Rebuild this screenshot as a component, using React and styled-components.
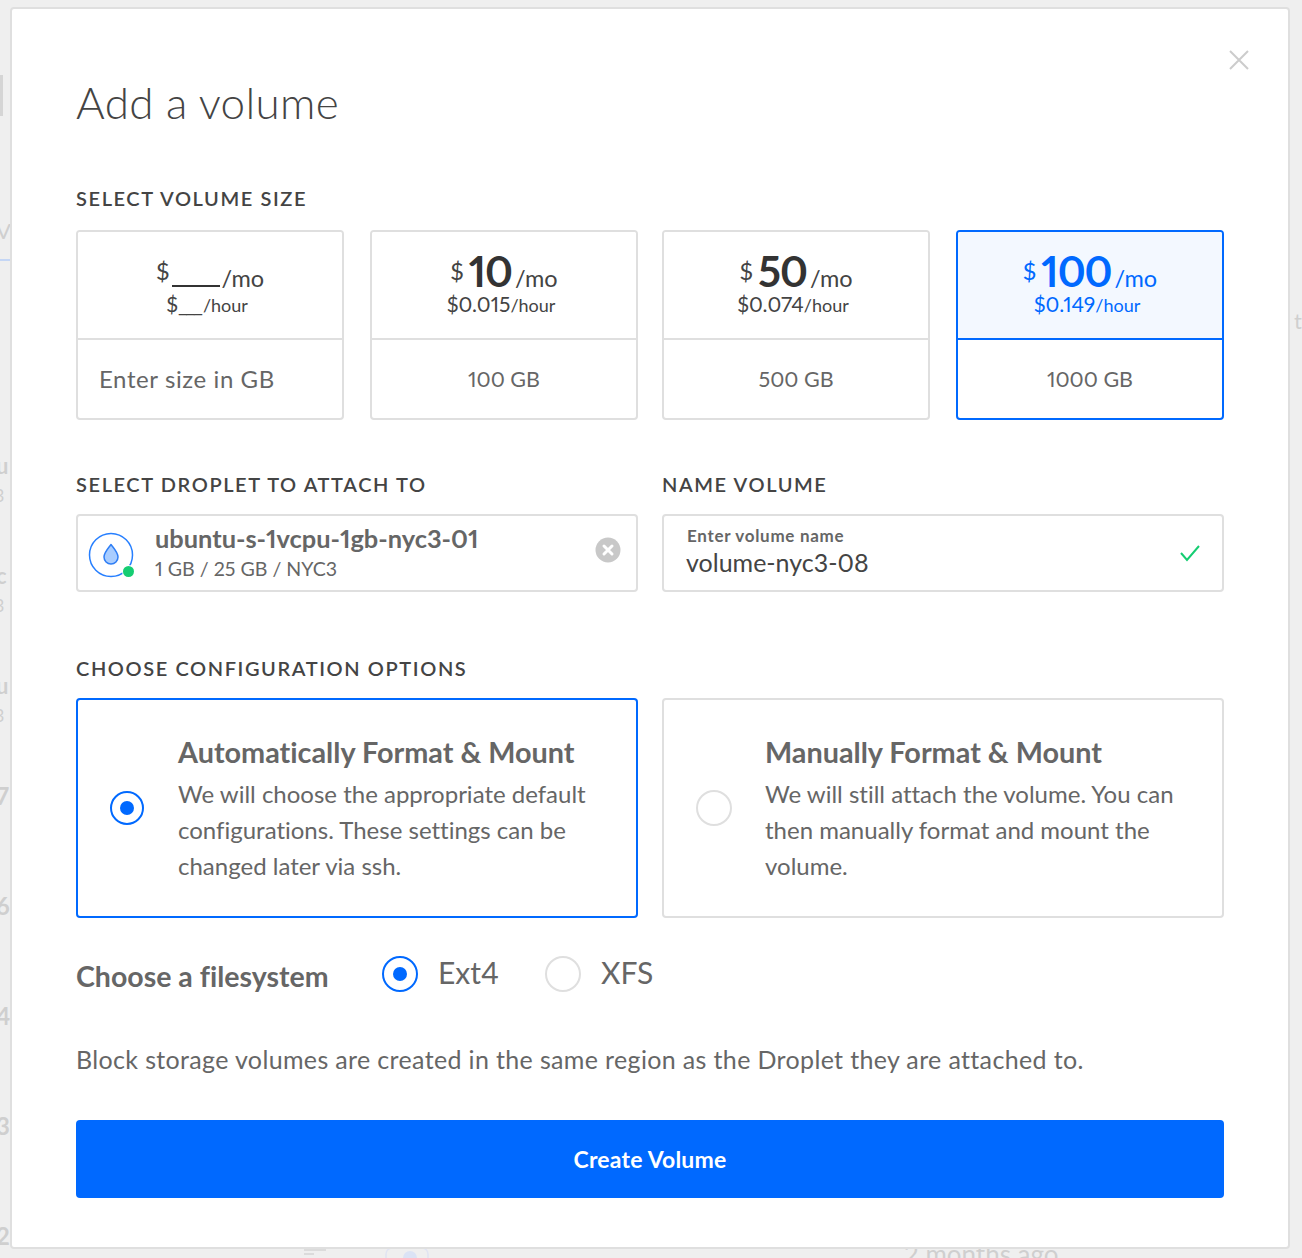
import React from 'react';
import styled, { createGlobalStyle } from 'styled-components';

const FONT = `Lato, "Open Sans", "Liberation Sans", sans-serif`;
const BLUE = '#0069ff';

const GlobalStyle = createGlobalStyle`
  html, body {
    margin: 0;
    padding: 0;
    background: #efefef;
  }
  body {
    font-family: ${FONT};
    font-variant-ligatures: none;
    font-variant-numeric: proportional-nums;
    color: #444;
  }
  * {
    box-sizing: border-box;
  }
`;

const Page = styled.div`
  position: relative;
  width: 1302px;
  height: 1258px;
  padding: 7px 12px 0 10px;
  overflow: hidden;
`;

const BackdropText = styled.span`
  position: absolute;
  left: ${(p) => p.$left}px;
  top: ${(p) => p.$top}px;
  font-size: ${(p) => p.$size}px;
  font-weight: ${(p) => p.$weight || 400};
  line-height: 1;
  color: #cfcfcf;
`;

const BackdropBar = styled.span`
  position: absolute;
  left: 0;
  top: ${(p) => p.$top}px;
  width: ${(p) => p.$width}px;
  height: ${(p) => p.$height}px;
  background: ${(p) => p.$color};
`;

const BackdropIcon = styled.svg`
  position: absolute;
  left: 300px;
  top: 1244px;
`;

const Modal = styled.div`
  position: relative;
  height: 1242px;
  padding: 70px 64px 0 64px;
  background: #fff;
  border: 2px solid #dfdfdf;
  border-radius: 4px;
`;

const CloseButton = styled.button`
  position: absolute;
  top: 40px;
  right: 38px;
  width: 22px;
  height: 22px;
  padding: 0;
  display: block;
  background: none;
  border: 0;
`;

const Title = styled.h1`
  margin: 0 0 61px;
  height: 46px;
  font-size: 44px;
  line-height: 46px;
  font-weight: 300;
  letter-spacing: 0.3px;
  color: #444;
`;

const SectionLabel = styled.div`
  height: 24px;
  margin-bottom: ${(p) => (p.$roomy ? '20px' : '18px')};
  font-size: 20px;
  line-height: 24px;
  font-weight: 600;
  letter-spacing: 1.6px;
  color: #444;
  text-transform: uppercase;
`;

const TwoColumns = styled.div`
  display: grid;
  grid-template-columns: 1fr 1fr;
  gap: 24px;
`;

const SizeGrid = styled(TwoColumns)`
  margin-bottom: 52px;
`;

const SizePair = styled.div`
  display: flex;
  justify-content: space-between;
`;

const SizeCard = styled.div`
  width: 268px;
  height: 190px;
  display: flex;
  flex-direction: column;
  border: 2px solid ${(p) => (p.$selected ? BLUE : '#dfdfdf')};
  border-radius: 4px;
  overflow: hidden;
`;

const PriceArea = styled.div`
  height: 108px;
  flex: none;
  padding-top: 17px;
  display: flex;
  flex-direction: column;
  align-items: center;
  background: ${(p) => (p.$selected ? '#f3f8ff' : '#fff')};
  border-bottom: 2px solid ${(p) => (p.$selected ? BLUE : '#dfdfdf')};
  color: ${(p) => (p.$selected ? BLUE : '#444')};
`;

const MonthlyPrice = styled.div`
  height: 44px;
  display: flex;
  align-items: baseline;
  font-size: 23.500px;
  line-height: 44px;
`;

const Currency = styled.span`
  font-size: 24px;
  margin-right: ${(p) => (p.$tight ? '3px' : '5px')};
  position: relative;
  top: -7px;
`;

const Amount = styled.span`
  font-size: 42px;
  font-weight: 700;
  letter-spacing: -1px;
  color: ${(p) => (p.$selected ? BLUE : '#333')};
  margin-right: 3px;
`;

const BlankAmount = styled.span`
  position: relative;
  width: 48px;
  font-size: 42px;
  margin-right: 1px;
  &::before {
    content: '\\200b';
  }
  &::after {
    content: '';
    position: absolute;
    left: 0;
    right: 0;
    bottom: 6px;
    height: 2px;
    background: #333;
  }
`;

const HourlyPrice = styled.div`
  font-size: 21px;
  line-height: 24px;
  margin-top: -1px;
  padding-right: 6px;
`;

const HourBlank = styled.span`
  letter-spacing: -2px;
  margin-right: 2px;
`;

const HourUnit = styled.span`
  font-size: 18px;
`;

const SizeArea = styled.div`
  flex: 1;
  display: flex;
  align-items: center;
  justify-content: ${(p) => (p.$left ? 'flex-start' : 'center')};
  padding: ${(p) => (p.$left ? '0 0 2px 21px' : '0')};
  font-size: ${(p) => (p.$left ? '24px' : '21.500px')};
  letter-spacing: ${(p) => (p.$left ? '0.6px' : '0')};
  color: #666;
`;

const AttachGrid = styled(TwoColumns)`
  margin-bottom: 64px;
`;

const FieldBox = styled.div`
  position: relative;
  height: 78px;
  display: flex;
  align-items: center;
  border: 2px solid #dfdfdf;
  border-radius: 4px;
`;

const DropletIconWrap = styled.div`
  position: relative;
  width: 46px;
  height: 46px;
  margin: 4px 21px 0 10px;
  flex: none;
`;

const StatusDot = styled.span`
  position: absolute;
  right: 0;
  bottom: 1px;
  width: 11px;
  height: 11px;
  background: #15cd72;
  border-radius: 50%;
  box-shadow: 0 0 0 1px #fff;
`;

const DropletText = styled.div`
  flex: 1;
  display: flex;
  flex-direction: column;
  padding-bottom: 2px;
`;

const DropletName = styled.div`
  font-size: 25.400px;
  line-height: 30px;
  font-weight: 700;
  color: #666;
`;

const DropletMeta = styled.div`
  font-size: 19.600px;
  line-height: 24px;
  margin-top: 4px;
  color: #666;
`;

const ClearIcon = styled.svg`
  width: 26px;
  height: 26px;
  margin: 0 15px 6px 0;
  flex: none;
`;

const NameField = styled.div`
  flex: 1;
  padding: 0 0 4px 23px;
`;

const NameCaption = styled.div`
  font-size: 17px;
  line-height: 20px;
  font-weight: 700;
  letter-spacing: 0.7px;
  color: #666;
`;

const NameValue = styled.div`
  font-size: 25px;
  line-height: 30px;
  margin: 1px 0 0 -1px;
  color: #444;
`;

const CheckIcon = styled.svg`
  width: 22px;
  height: 18px;
  margin-right: 21px;
  flex: none;
`;

const ConfigGrid = styled(TwoColumns)`
  margin-bottom: 36px;
`;

const ConfigCard = styled.div`
  height: 220px;
  display: flex;
  align-items: center;
  padding: 2px 0 0 32px;
  border: 2px solid ${(p) => (p.$selected ? BLUE : '#dfdfdf')};
  border-radius: 4px;
`;

const Radio = styled.span`
  flex: none;
  width: ${(p) => p.$size || 36}px;
  height: ${(p) => p.$size || 36}px;
  display: flex;
  align-items: center;
  justify-content: center;
  border: 2px solid ${(p) => (p.$checked ? BLUE : '#dfdfdf')};
  border-radius: 50%;
  &::after {
    content: '';
    display: ${(p) => (p.$checked ? 'block' : 'none')};
    width: 14px;
    height: 14px;
    background: ${BLUE};
    border-radius: 50%;
  }
`;

const ConfigRadio = styled(Radio)`
  margin-top: -2px;
`;

const ConfigBody = styled.div`
  margin-left: ${(p) => (p.$selected ? '34px' : '33px')};
  flex: 1;
`;

const ConfigTitle = styled.div`
  font-size: 28.800px;
  line-height: 36px;
  font-weight: 700;
  color: #666;
`;

const ConfigText = styled.div`
  font-size: 24px;
  line-height: 36px;
  margin-top: 6px;
  color: #666;
`;

const FilesystemRow = styled.div`
  height: 40px;
  display: flex;
  align-items: center;
  margin-bottom: 48px;
`;

const FilesystemLabel = styled.div`
  width: 306px;
  font-size: 28.500px;
  font-weight: 700;
  color: #666;
  padding-top: 4px;
`;

const FilesystemOption = styled.label`
  display: flex;
  align-items: center;
  margin-right: 46px;
  font-size: 30px;
  color: #666;
`;

const OptionText = styled.span`
  margin-left: 20px;
  position: relative;
  top: -2px;
`;

const Note = styled.p`
  margin: 0 0 44px;
  height: 34px;
  font-size: 25px;
  line-height: 34px;
  letter-spacing: 0.35px;
  color: #666;
`;

const CreateButton = styled.button`
  display: block;
  width: 100%;
  height: 78px;
  background: ${BLUE};
  border: 0;
  border-radius: 4px;
  font-family: ${FONT};
  font-size: 23px;
  font-weight: 700;
  letter-spacing: 0.2px;
  color: #fff;
`;

const backdropGlyphs = [
  { left: -4, top: 220, size: 22, text: 'V' },
  { left: 1294, top: 310, size: 22, text: 't' },
  { left: -4, top: 455, size: 22, weight: 700, text: 'u' },
  { left: -6, top: 486, size: 18, text: '3' },
  { left: -4, top: 565, size: 22, weight: 700, text: 'c' },
  { left: -6, top: 596, size: 18, text: '3' },
  { left: -4, top: 675, size: 22, weight: 700, text: 'u' },
  { left: -6, top: 706, size: 18, text: '3' },
  { left: -4, top: 784, size: 24, weight: 700, text: '7' },
  { left: -6, top: 818, size: 18, text: '1' },
  { left: -4, top: 894, size: 24, weight: 700, text: '6' },
  { left: -6, top: 928, size: 18, text: '1' },
  { left: -4, top: 1004, size: 24, weight: 700, text: '4' },
  { left: -6, top: 1038, size: 18, text: '1' },
  { left: -4, top: 1114, size: 24, weight: 700, text: '3' },
  { left: -6, top: 1148, size: 18, text: '1' },
  { left: -4, top: 1224, size: 24, weight: 700, text: '2' },
  { left: 904, top: 1241, size: 26, text: '2 months ago' },
];

const DropletIcon = () => (
  <svg width="46" height="46" viewBox="0 0 46 46" fill="none">
    <circle cx="23" cy="23" r="21.500" stroke={BLUE} strokeOpacity="0.85" strokeWidth="1.500" />
    <path
      d="M23 12.500c3 4 7 8 7 12.500a7 7 0 0 1-14 0c0-4.500 4-8.500 7-12.500z"
      fill="#a9cdff"
      stroke="#2f7ef5"
      strokeWidth="1.500"
      strokeLinejoin="round"
    />
  </svg>
);

const PlanCard = ({ amount, hourly, size, selected }) => (
  <SizeCard $selected={selected}>
    <PriceArea $selected={selected}>
      <MonthlyPrice>
        <Currency>$</Currency>
        <Amount $selected={selected}>{amount}</Amount>
        /mo
      </MonthlyPrice>
      <HourlyPrice>
        {hourly}
        <HourUnit>/hour</HourUnit>
      </HourlyPrice>
    </PriceArea>
    <SizeArea>{size}</SizeArea>
  </SizeCard>
);

const App = () => {
  return (
    <Page>
      <GlobalStyle />
      <BackdropBar $top={75} $width={3} $height={41} $color="#d5d5d5" />
      <BackdropBar $top={259} $width={10} $height={2} $color="#c4d6f5" />
      <BackdropIcon width="140" height="14" viewBox="0 0 140 14" fill="none">
        <path d="M4 6h22M4 10h10" stroke="#d5d5d5" strokeWidth="1.500" />
        <path d="M86 14v-4a6 6 0 0 1 6-6h30a6 6 0 0 1 6 6v4" stroke="#e0e4f2" strokeWidth="1.500" />
        <circle cx="110" cy="14" r="7" fill="#dbe3f5" />
      </BackdropIcon>
      {backdropGlyphs.map((glyph, index) => (
        <BackdropText key={index} $left={glyph.left} $top={glyph.top} $size={glyph.size} $weight={glyph.weight}>
          {glyph.text}
        </BackdropText>
      ))}
      <Modal>
        <CloseButton aria-label="Close">
          <svg width="22" height="22" viewBox="0 0 22 22" fill="none" stroke="#ccc" strokeWidth="2">
            <path d="M2 2l18 18M20 2L2 20" />
          </svg>
        </CloseButton>

        <Title>Add a volume</Title>

        <SectionLabel $roomy>Select volume size</SectionLabel>
        <SizeGrid>
          <SizePair>
            <SizeCard>
              <PriceArea>
                <MonthlyPrice>
                  <Currency $tight>$</Currency>
                  <BlankAmount />
                  /mo
                </MonthlyPrice>
                <HourlyPrice>
                  $<HourBlank>___</HourBlank>
                  <HourUnit>/hour</HourUnit>
                </HourlyPrice>
              </PriceArea>
              <SizeArea $left>Enter size in GB</SizeArea>
            </SizeCard>
            <PlanCard amount="10" hourly="$0.015" size="100 GB" />
          </SizePair>
          <SizePair>
            <PlanCard amount="50" hourly="$0.074" size="500 GB" />
            <PlanCard amount="100" hourly="$0.149" size="1000 GB" selected />
          </SizePair>
        </SizeGrid>

        <AttachGrid>
          <div>
            <SectionLabel>Select Droplet to attach to</SectionLabel>
            <FieldBox>
              <DropletIconWrap>
                <DropletIcon />
                <StatusDot />
              </DropletIconWrap>
              <DropletText>
                <DropletName>ubuntu-s-1vcpu-1gb-nyc3-01</DropletName>
                <DropletMeta>1 GB / 25 GB / NYC3</DropletMeta>
              </DropletText>
              <ClearIcon viewBox="0 0 26 26">
                <circle cx="13" cy="13" r="12.500" fill="#c8c8c8" />
                <path d="M9 9l8 8M17 9l-8 8" stroke="#fff" strokeWidth="3" strokeLinecap="round" />
              </ClearIcon>
            </FieldBox>
          </div>
          <div>
            <SectionLabel>Name volume</SectionLabel>
            <FieldBox>
              <NameField>
                <NameCaption>Enter volume name</NameCaption>
                <NameValue>volume-nyc3-08</NameValue>
              </NameField>
              <CheckIcon viewBox="0 0 22 18" fill="none" stroke="#15cd72" strokeWidth="2">
                <path d="M2 9l6 7L20 2" />
              </CheckIcon>
            </FieldBox>
          </div>
        </AttachGrid>

        <SectionLabel>Choose configuration options</SectionLabel>
        <ConfigGrid>
          <ConfigCard $selected>
            <ConfigRadio $checked $size={34} />
            <ConfigBody $selected>
              <ConfigTitle>Automatically Format &amp; Mount</ConfigTitle>
              <ConfigText>
                We will choose the appropriate default configurations. These settings can be changed later via ssh.
              </ConfigText>
            </ConfigBody>
          </ConfigCard>
          <ConfigCard>
            <ConfigRadio />
            <ConfigBody>
              <ConfigTitle>Manually Format &amp; Mount</ConfigTitle>
              <ConfigText>
                We will still attach the volume. You can then manually format and mount the volume.
              </ConfigText>
            </ConfigBody>
          </ConfigCard>
        </ConfigGrid>

        <FilesystemRow>
          <FilesystemLabel>Choose a filesystem</FilesystemLabel>
          <FilesystemOption>
            <Radio $checked />
            <OptionText>Ext4</OptionText>
          </FilesystemOption>
          <FilesystemOption>
            <Radio />
            <OptionText>XFS</OptionText>
          </FilesystemOption>
        </FilesystemRow>

        <Note>Block storage volumes are created in the same region as the Droplet they are attached to.</Note>

        <CreateButton>Create Volume</CreateButton>
      </Modal>
    </Page>
  );
};

export default App;
